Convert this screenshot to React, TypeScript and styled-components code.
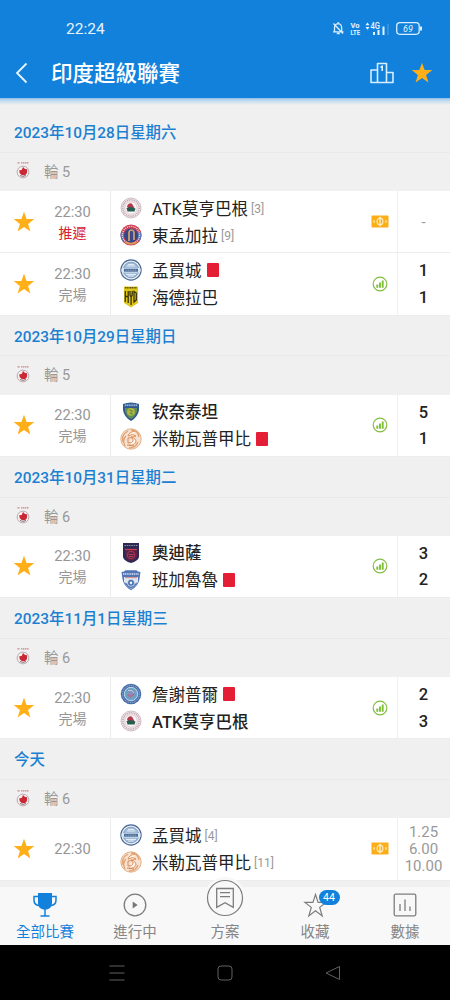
import React from "react";
import styled, { createGlobalStyle, css } from "styled-components";

type CrestName =
  | "atk"
  | "eastBengal"
  | "mumbai"
  | "hyderabad"
  | "chennaiyin"
  | "goa"
  | "odisha"
  | "bengaluru"
  | "jamshedpur";

type Team = {
  name: string;
  crest: CrestName;
  rank?: number;
  redCard?: boolean;
  winner?: boolean;
};

type Match = {
  time: string;
  status?: string;
  postponed?: boolean;
  teams: Team[];
  icon: "odds" | "stats";
  scores?: string[];
  odds?: string[];
};

type Section = {
  date: string;
  round: string;
  matches: Match[];
};

const sections: Section[] = [
  {
    date: "2023年10月28日星期六",
    round: "輪 5",
    matches: [
      {
        time: "22:30",
        status: "推遲",
        postponed: true,
        icon: "odds",
        odds: ["-"],
        teams: [
          { name: "ATK莫亨巴根", crest: "atk", rank: 3 },
          { name: "東孟加拉", crest: "eastBengal", rank: 9 },
        ],
      },
      {
        time: "22:30",
        status: "完場",
        icon: "stats",
        scores: ["1", "1"],
        teams: [
          { name: "孟買城", crest: "mumbai", redCard: true },
          { name: "海德拉巴", crest: "hyderabad" },
        ],
      },
    ],
  },
  {
    date: "2023年10月29日星期日",
    round: "輪 5",
    matches: [
      {
        time: "22:30",
        status: "完場",
        icon: "stats",
        scores: ["5", "1"],
        teams: [
          { name: "钦奈泰坦", crest: "chennaiyin", winner: true },
          { name: "米勒瓦普甲比", crest: "goa", redCard: true },
        ],
      },
    ],
  },
  {
    date: "2023年10月31日星期二",
    round: "輪 6",
    matches: [
      {
        time: "22:30",
        status: "完場",
        icon: "stats",
        scores: ["3", "2"],
        teams: [
          { name: "奧迪薩", crest: "odisha", winner: true },
          { name: "班加魯魯", crest: "bengaluru", redCard: true },
        ],
      },
    ],
  },
  {
    date: "2023年11月1日星期三",
    round: "輪 6",
    matches: [
      {
        time: "22:30",
        status: "完場",
        icon: "stats",
        scores: ["2", "3"],
        teams: [
          { name: "詹謝普爾", crest: "jamshedpur", redCard: true },
          { name: "ATK莫亨巴根", crest: "atk", winner: true },
        ],
      },
    ],
  },
  {
    date: "今天",
    round: "輪 6",
    matches: [
      {
        time: "22:30",
        icon: "odds",
        odds: ["1.25", "6.00", "10.00"],
        teams: [
          { name: "孟買城", crest: "mumbai", rank: 4 },
          { name: "米勒瓦普甲比", crest: "goa", rank: 11 },
        ],
      },
    ],
  },
];

const crests: Record<CrestName, React.ReactNode> = {
  atk: (
    <>
      <circle cx="11" cy="11" r="10" fill="#f1e7ea" stroke="#c4b1b8" strokeWidth="0.8" />
      <circle cx="11" cy="11" r="8.2" fill="none" stroke="#c0a5ae" strokeWidth="1.6" strokeDasharray="1 0.9" />
      <circle cx="11" cy="11" r="6.2" fill="#fbf7f6" stroke="#c7a9b0" strokeWidth="0.5" />
      <path d="M7 9.500c1-3.500 4.500-4 5.500-2l2 3.500H8z" fill="#b23a4c" />
      <path d="M6.500 11l4-1 5 1.500-1 3H7.500z" fill="#255e50" />
    </>
  ),
  eastBengal: (
    <>
      <circle cx="11" cy="11" r="10.500" fill="#cb4055" />
      <path d="M3 18A10.500 10.500 0 0 1 1 8l3 1v6zM19 18a10.500 10.500 0 0 0 2-10l-3 1v6z" fill="#5975b3" />
      <circle cx="11" cy="11" r="8.600" fill="none" stroke="#f0d6d7" strokeWidth="1.400" strokeDasharray="1 1" />
      <circle cx="11" cy="11.500" r="7" fill="#31478a" />
      <path d="M9 17V9c0-4 5-4 5 0v7" fill="none" stroke="#cfa370" strokeWidth="1.700" />
      <path d="M11.500 7v9" stroke="#6b3d72" strokeWidth="1.500" />
      <path d="M5.500 18q5.500 3.500 11 0" fill="none" stroke="#d89f56" strokeWidth="1.600" />
    </>
  ),
  mumbai: (
    <>
      <circle cx="11" cy="11" r="10.100" fill="#e3edf5" stroke="#4a6896" strokeWidth="1.200" />
      <circle cx="11" cy="11" r="7.800" fill="#a3bedb" stroke="#7891b6" strokeWidth="0.8" />
      <path d="M7 7h8M8 5.500h6M6 15.500h10M8 17h6" stroke="#e9f1f7" strokeWidth="0.900" />
      <rect x="1.500" y="9" width="19" height="4.500" rx="1" fill="#d9e7f2" />
      <path d="M4 9.700h14v3H4z" fill="#4c6c98" />
      <path d="M5.500 11.200h11" stroke="#92abc9" strokeWidth="0.9" strokeDasharray="1.500 0.8" />
    </>
  ),
  hyderabad: (
    <>
      <path d="M4 .5h14v16.500l-7 4.500-7-4.500z" fill="#e0c71d" />
      <path d="M5 1.800h12" stroke="#5b520c" strokeWidth="1.600" strokeDasharray="1.200 0.5" />
      <path d="M5.300 5v11M8.200 5v12M5.300 10.500h3M10 5v4l1.100 2 1.100-2V5M11.100 11v8M14 5.500v10.500l2.300-2V7z" fill="none" stroke="#36330f" strokeWidth="1.300" />
    </>
  ),
  chennaiyin: (
    <>
      <path d="M3 3q8-3 16 0v6q-1 7-8 11Q4 16 3 9z" fill="#31588a" />
      <path d="M4 3.500q7-2 14 0v2H4z" fill="#426fa9" />
      <path d="M5 4.200h12" stroke="#d3dee8" strokeWidth="0.900" strokeDasharray="1.200 0.600" />
      <path d="M5 7h12v3q-1 5-6 8-5-3-6-8z" fill="#618c57" />
      <circle cx="11" cy="10.800" r="3.900" fill="#b0b73b" />
      <path d="M9 9l3.500 1-2.500 2.500 3 .5" fill="none" stroke="#5c7e52" strokeWidth="0.900" />
    </>
  ),
  goa: (
    <>
      <circle cx="11" cy="11" r="10.200" fill="#f8e2cf" stroke="#dcab83" strokeWidth="0.9" />
      <path d="M3 14Q1 7 8 3M5 18q-3-6 1-10M11 2q7 0 8 7M18 14q-2 6-9 6" fill="none" stroke="#e2a170" strokeWidth="1.300" />
      <path d="M15 3q-6 1-7 5 5-3 8 0-3 1-5 1 5 1 5 5-2 4-7 3" fill="#fff2e7" stroke="#de925d" strokeWidth="1" />
      <path d="M8 10q5-1 5 2t-5 3zM7 17l7 1" fill="none" stroke="#cf8152" strokeWidth="0.900" />
    </>
  ),
  odisha: (
    <>
      <path d="M3 1h16v14q-1 4-8 6-7-2-8-6z" fill="#2c2a54" />
      <path d="M4.500 3.500h13" stroke="#8d8fa6" strokeWidth="1.200" strokeDasharray="1.500 0.8" />
      <path d="M5 7h12v8q-2 3-6 4-4-1-6-4z" fill="#582347" />
      <path d="M5 7.500h12" stroke="#d63c50" strokeWidth="1.200" />
      <circle cx="11" cy="13" r="3.800" fill="none" stroke="#b03552" />
      <path d="M8.500 12.500h5M9 14.500h4" stroke="#c64459" strokeWidth="0.8" />
    </>
  ),
  bengaluru: (
    <>
      <path d="M1.500 3q3 0 4-1.800h11q1 1.800 4 1.800l-1 7q-1 7-8.500 11.300Q3.500 17 2.500 10z" fill="#5275b5" />
      <path d="M4 8h14v5q-2 4-7 7-5-3-7-7z" fill="#dfe9f5" />
      <path d="M3 5h16" stroke="#dae7f5" strokeWidth="1.600" strokeDasharray="1.200 0.6" />
      <path d="M5 8.700h12" stroke="#d8827f" strokeWidth="1" />
      <path d="M4.500 13q1.500 4 6.500 6.500 5-2.500 6.500-6.500l-2 1.500h-9z" fill="#5174b4" />
      <circle cx="11" cy="13.800" r="3.500" fill="#416bac" stroke="#e6eef7" strokeWidth="0.8" />
      <path d="M9.500 13.300l1.500-1 1.500 1-.7 2h-1.600z" fill="#e8f0f9" />
    </>
  ),
  jamshedpur: (
    <>
      <circle cx="11" cy="11" r="10.300" fill="#4b6fab" />
      <circle cx="11" cy="11" r="8.500" fill="none" stroke="#a2b8d8" strokeWidth="1" strokeDasharray="1 0.9" />
      <circle cx="11" cy="11" r="6.700" fill="#66a4c8" stroke="#dde9ef" strokeWidth="0.8" />
      <path d="M7 13V8l3-2 5 2v3l-4 5z" fill="#8790bb" />
      <path d="M7.500 12l3 1.500 3.500-2.500" fill="none" stroke="#b9688b" strokeWidth="1.500" />
      <path d="M8 7.500h4l2 2.500" fill="none" stroke="#a8d4dd" />
    </>
  ),
};

function StarIcon({ size }: { size: number }): JSX.Element {
  return (
    <svg width={size} height={size} viewBox="0 0 22 22">
      <path d="M11 .8l2.600 7.300h7.700l-6.200 4.800 2.300 7.700-6.400-4.600-6.400 4.600 2.300-7.700L.7 8.100h7.700z" fill="#ffaf18" />
    </svg>
  );
}

function OddsIcon(): JSX.Element {
  return (
    <svg width="18" height="13" viewBox="0 0 18 13">
      <rect x="0.500" y="0.500" width="17" height="12" rx="0.8" fill="#fcae19" />
      <ellipse cx="9" cy="6.500" rx="2.900" ry="3.300" fill="none" stroke="#ffe9b8" strokeWidth="1.200" />
      <path d="M9 1.800v9.400" stroke="#fff0cc" strokeWidth="1.400" />
      <path d="M3 5.200v2.600M15 5.200v2.600" stroke="#fff1ca" strokeWidth="1.200" />
    </svg>
  );
}

function StatsIcon(): JSX.Element {
  return (
    <svg width="16" height="16" viewBox="0 0 16 16">
      <circle cx="8" cy="8" r="6.800" fill="none" stroke="#84bd43" strokeWidth="1.200" />
      <path d="M5.300 8.500v3.200M8 6.500v5.200M10.700 4.500v7.200" stroke="#7fbd38" strokeWidth="1.900" />
    </svg>
  );
}

function LeagueIcon(): JSX.Element {
  return (
    <svg width="14" height="18" viewBox="0 0 14 18">
      <path d="M1.500 1.900h2.500M5 1.900h7.500" stroke="#c9838b" strokeWidth="1.200" strokeDasharray="1.500 0.5" />
      <circle cx="7" cy="11" r="5.900" fill="#f5efef" stroke="#b9adb1" strokeWidth="1" />
      <path d="M3.200 9.300l2.500-.2 1.300-3 2 1.900 2.200.3-.3 4-2 2-3.200-.2-2-1.800z" fill="#cb2836" />
      <path d="M4 14.500q3 1.800 6 0" stroke="#74555d" fill="none" strokeWidth="0.8" />
    </svg>
  );
}

function StatusIcons(): JSX.Element {
  return (
    <StatusSvg width="92" height="16" viewBox="0 0 92 16">
      <g fill="none" stroke="#d9efff" strokeWidth="1.300">
        <path d="M1 11.800h10.500M2.500 11.500V8q0-4 3.800-4.300 3.200.3 3.400 4.300v3.500M6.200 3.500V2M4.800 13.500h3M1.500 3.500l9.500 10" />
        <rect x="64.700" y="2.700" width="22.500" height="11.600" rx="3.200" />
        <path d="M89 6.500v4" strokeWidth="2" />
      </g>
      <g fill="#e5f5ff">
        <text x="18.500" y="7.500" fontSize="7" fontWeight="700" textLength="9" lengthAdjust="spacingAndGlyphs">Vo</text>
        <text x="18.500" y="15" fontSize="7" fontWeight="700" textLength="9.500" lengthAdjust="spacingAndGlyphs">LTE</text>
        <path d="M33.500 5.200l2-2.700 2 2.700zM33.500 7h4l-2 2.700z" />
        <text x="38.500" y="8.700" fontSize="9" fontWeight="500" textLength="9.500" lengthAdjust="spacingAndGlyphs">4G</text>
        <path d="M41 12h2v3h-2zM45.500 10h2v5h-2zM50.500 6.500h2V15h-2z" />
        <path d="M55.500 4h1v11h-1z" opacity="0.3" />
        <text x="76" y="12" fontSize="9" textAnchor="middle" fontStyle="italic">69</text>
      </g>
    </StatusSvg>
  );
}

function TeamLine({ name, crest, rank, redCard, winner }: Team): JSX.Element {
  return (
    <TeamRow>
      <svg width="22" height="22" viewBox="0 0 22 22">{crests[crest]}</svg>
      <TeamName $bold={winner}>{name}</TeamName>
      {rank && <Rank>[{rank}]</Rank>}
      {redCard && <RedCard />}
    </TeamRow>
  );
}

function MatchItem({ match }: { match: Match }): JSX.Element {
  return (
    <MatchRow>
      <Favourite aria-label="favourite">
        <StarIcon size={22} />
      </Favourite>
      <Kickoff>
        <span>{match.time}</span>
        {match.status && <Status $postponed={match.postponed}>{match.status}</Status>}
      </Kickoff>
      <Teams>
        {match.teams.map((team) => (
          <TeamLine key={team.name} {...team} />
        ))}
      </Teams>
      <MatchIcon>{match.icon === "odds" ? <OddsIcon /> : <StatsIcon />}</MatchIcon>
      {match.scores ? (
        <Scores>
          {match.scores.map((score, i) => (
            <span key={i}>{score}</span>
          ))}
        </Scores>
      ) : (
        <Odds>
          {match.odds?.map((odd) => (
            <span key={odd}>{odd}</span>
          ))}
        </Odds>
      )}
    </MatchRow>
  );
}

export default function App(): JSX.Element {
  return (
    <>
      <GlobalStyle />
      <Screen>
        <Header>
          <StatusBar>
            <Clock>22:24</Clock>
            <StatusIcons />
          </StatusBar>
          <TitleBar>
            <BackIcon width="14" height="22" viewBox="0 0 14 22">
              <path d="M11.500 1.500L2 11l9.500 9.500" fill="none" stroke="#eaf6ff" strokeWidth="1.800" />
            </BackIcon>
            <Title>印度超級聯賽</Title>
            <svg width="24" height="22" viewBox="0 0 24 22">
              <path
                d="M7.500 20.500V1.500h9v19M7.500 8H1v12.500h22V10.500h-6.500M10.500 5.500L12.200 4v5"
                fill="none"
                stroke="#d7eeff"
                strokeWidth="1.600"
                strokeLinejoin="round"
              />
            </svg>
            <HeaderStar>
              <StarIcon size={22} />
            </HeaderStar>
          </TitleBar>
        </Header>
        <Shadow />
        <List>
          {sections.map((section) => (
            <section key={section.date}>
              <DateRow>{section.date}</DateRow>
              <RoundRow>
                <LeagueIcon />
                {section.round}
              </RoundRow>
              {section.matches.map((match, i) => (
                <MatchItem key={i} match={match} />
              ))}
            </section>
          ))}
        </List>
        <TabBar>
          <Tab $active>
            <TabIcon>
              <svg width="24" height="26" viewBox="0 0 24 26">
                <path d="M5 1h14v10q0 5-5 6.500h-4Q5 16 5 11z" fill="#1281dc" />
                <path d="M5 4.500H1V8q0 5 5 5.500M19 4.500h4V8q0 5-5 5.500M12 17v6.500M7.500 24h9" fill="none" stroke="#1281dc" strokeWidth="1.500" />
              </svg>
            </TabIcon>
            全部比賽
          </Tab>
          <Tab>
            <TabIcon>
              <svg width="24" height="24" viewBox="0 0 24 24">
                <circle cx="12" cy="12" r="10.800" fill="none" stroke="#7d7d7d" strokeWidth="1.300" />
                <path d="M9.700 8.500v7l5-3.500z" fill="#777" />
              </svg>
            </TabIcon>
            進行中
          </Tab>
          <Tab>
            <TabIcon>
              <PlanIcon width="44" height="44" viewBox="0 0 44 44">
                <circle cx="22" cy="22" r="21" fill="#f8f8f8" />
                <circle cx="22" cy="22" r="17.500" fill="#f8f8f8" stroke="#7d7d7d" strokeWidth="1.200" />
                <path d="M13.700 12.500h16.600v18.800L22 26.700l-8.300 4.600zM17 16.700h10M17 20.700h10" fill="none" stroke="#7d7d7d" strokeWidth="1.300" />
              </PlanIcon>
            </TabIcon>
            方案
          </Tab>
          <Tab>
            <TabIcon>
              <svg width="25" height="25" viewBox="0 0 25 25">
                <path d="M12.500 1.500l2.600 7.900h8l-6.400 5 2.500 8.600-6.700-5.200L5.800 23l2.500-8.600-6.400-5h8z" fill="none" stroke="#7d7d7d" strokeWidth="1.200" />
              </svg>
              <Badge>44</Badge>
            </TabIcon>
            收藏
          </Tab>
          <Tab>
            <TabIcon>
              <svg width="24" height="24" viewBox="0 0 24 24">
                <rect x="1.200" y="1.200" width="21.600" height="21.600" rx="1.500" fill="none" stroke="#7d7d7d" strokeWidth="1.300" />
                <path d="M7 11v7M12 6.500V18M17 13.500V18" stroke="#7d7d7d" strokeWidth="1.300" />
              </svg>
            </TabIcon>
            數據
          </Tab>
        </TabBar>
        <SystemBar>
          <svg width="16" height="16" viewBox="0 0 16 16">
            <path d="M.5 1h15M.5 8h15M.5 15h15" stroke="#606060" strokeWidth="1" />
          </svg>
          <svg width="16" height="16" viewBox="0 0 16 16">
            <rect x="1" y="1" width="14" height="14" rx="3" fill="none" stroke="#606060" strokeWidth="1" />
          </svg>
          <svg width="16" height="16" viewBox="0 0 16 16">
            <path d="M14.500 1.500v13L1 8z" fill="none" stroke="#606060" strokeWidth="1" strokeLinejoin="round" />
          </svg>
        </SystemBar>
      </Screen>
    </>
  );
}

const GlobalStyle = createGlobalStyle`
  body {
    margin: 0;
    font-family: Roboto, "Noto Sans CJK TC", sans-serif;
  }

  svg {
    display: block;
    flex-shrink: 0;
  }
`;

const Screen = styled.div`
  width: 450px;
  height: 1000px;
  display: flex;
  flex-direction: column;
  overflow: hidden;
  background: #f0f0f0;
`;

const Header = styled.header`
  height: 98px;
  flex-shrink: 0;
  color: #fff;
  background: #1281dc;
`;

const StatusBar = styled.div`
  height: 48px;
  display: flex;
  justify-content: space-between;
  box-sizing: border-box;
  padding: 20px 26px 0 66px;
`;

const Clock = styled.span`
  font-size: 15.5px;
  line-height: 18px;
  color: #e6f4ff;
`;

const StatusSvg = styled.svg`
  font-family: Roboto, sans-serif;
`;

const TitleBar = styled.div`
  height: 50px;
  display: flex;
  align-items: center;
  box-sizing: border-box;
  padding: 0 17px 1px 15px;
`;

const BackIcon = styled.svg`
  margin-right: 22px;
`;

const Title = styled.h1`
  flex: 1;
  margin: 0;
  padding-top: 2px;
  font-size: 21.5px;
  font-weight: 500;
  line-height: 30px;
`;

const HeaderStar = styled.div`
  margin-left: 17px;
`;

const Shadow = styled.div`
  height: 7px;
  flex-shrink: 0;
  background: linear-gradient(#8dbfe9, #c5dcf0 40%, #f0f0f0);
`;

const List = styled.main`
  height: 782px;
  flex-shrink: 0;
  box-sizing: border-box;
  padding-top: 7px;
`;

const DateRow = styled.h2`
  height: 40.75px;
  margin: 0;
  box-sizing: border-box;
  padding-left: 14px;
  border-bottom: 1px solid #e9e9e9;
  font-size: 15.4px;
  font-weight: 500;
  line-height: 42px;
  color: #1c80d2;
`;

const RoundRow = styled.div`
  height: 38.25px;
  display: flex;
  align-items: center;
  gap: 14px;
  box-sizing: border-box;
  padding: 0 0 3px 16px;
  font-size: 14.5px;
  color: #999;
`;

const MatchRow = styled.article`
  height: 62.25px;
  display: flex;
  box-sizing: border-box;
  border-bottom: 1px solid #ececec;
  background: #fff;
`;

const Favourite = styled.div`
  width: 48px;
  display: flex;
  align-items: center;
  justify-content: center;
`;

const Kickoff = styled.div`
  width: 62px;
  display: flex;
  flex-direction: column;
  align-items: center;
  justify-content: center;
  box-sizing: border-box;
  padding: 2px 13px 0 0;
  font-size: 14.7px;
  line-height: 21px;
  color: #969696;
`;

const Status = styled.span<{ $postponed?: boolean }>`
  font-size: 14px;

  ${({ $postponed }) =>
    $postponed &&
    css`
      color: #d9202f;
    `}
`;

const Teams = styled.div`
  flex: 1;
  display: flex;
  flex-direction: column;
  justify-content: center;
  padding-left: 9px;
  border-left: 1px solid #ececec;
`;

const TeamRow = styled.div`
  height: 27px;
  display: flex;
  align-items: center;
`;

const TeamName = styled.span<{ $bold?: boolean }>`
  margin-left: 10px;
  padding-top: 2px;
  font-size: 16.5px;
  font-weight: ${({ $bold }) => ($bold ? 500 : 400)};
  line-height: 27px;
  color: #222;
`;

const Rank = styled.span`
  margin-left: 3px;
  padding-top: 1px;
  font-size: 12px;
  color: #999;
`;

const RedCard = styled.span`
  width: 12px;
  height: 14px;
  margin-left: 5px;
  border-radius: 1px;
  background: #e41e34;
`;

const MatchIcon = styled.div`
  width: 35px;
  display: flex;
  align-items: center;
  justify-content: center;
`;

const Scores = styled.div`
  width: 53px;
  display: flex;
  flex-direction: column;
  align-items: center;
  justify-content: center;
  box-sizing: border-box;
  padding: 2px 1px 0 0;
  border-left: 1px solid #f0f0f0;
  font-size: 16.5px;
  font-weight: 500;
  line-height: 26.5px;
  color: #222;
`;

const Odds = styled(Scores)`
  font-size: 15px;
  font-weight: 400;
  line-height: 17px;
  color: #999;
`;

const TabBar = styled.nav`
  height: 58px;
  flex-shrink: 0;
  display: flex;
  background: #f8f8f8;
`;

const Tab = styled.div<{ $active?: boolean }>`
  width: 90px;
  display: flex;
  flex-direction: column;
  align-items: center;
  font-size: 14.5px;
  line-height: 20px;
  color: ${({ $active }) => ($active ? "#1281dc" : "#858585")};
`;

const TabIcon = styled.div`
  height: 36px;
  display: flex;
  align-items: center;
  justify-content: center;
  position: relative;
`;

const PlanIcon = styled.svg`
  margin-top: -15px;
`;

const Badge = styled.span`
  position: absolute;
  top: 3px;
  left: 16px;
  width: 21px;
  height: 15px;
  border-radius: 8px;
  background: #1281dc;
  color: #fff;
  font-size: 10.5px;
  line-height: 15px;
  text-align: center;
`;

const SystemBar = styled.footer`
  height: 55px;
  flex-shrink: 0;
  display: flex;
  align-items: center;
  justify-content: center;
  gap: 92px;
  background: #000;
`;
